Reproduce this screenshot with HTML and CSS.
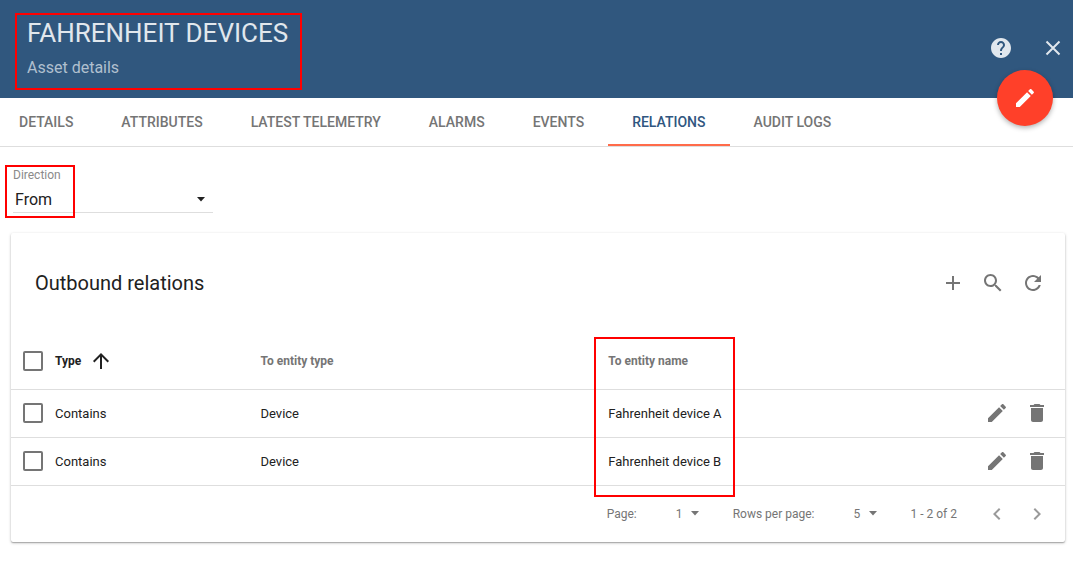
FILE: index.html
```html
<!DOCTYPE html>
<html lang="en">
<head>
<meta charset="utf-8">
<title>Asset details</title>
<meta name="viewport" content="width=device-width, initial-scale=1">
<link rel="stylesheet" href="styles.css">
</head>
<body>
<svg class="sprite" aria-hidden="true">
  <symbol id="pencil" viewBox="0 0 24 24"><path d="M3 17.25V21h3.75L17.81 9.94l-3.75-3.75L3 17.25zM20.71 7.04c.39-.39.39-1.02 0-1.41l-2.34-2.34c-.39-.39-1.02-.39-1.41 0l-1.83 1.83 3.75 3.75 1.83-1.83z"/></symbol>
  <symbol id="trash" viewBox="0 0 24 24"><path d="M6 19c0 1.1.9 2 2 2h8c1.100 0 2-.9 2-2V7H6v12zM19 4h-3.500l-1-1h-5l-1 1H5v2h14V4z"/></symbol>
  <symbol id="caret" viewBox="0 0 10 5"><path d="M1 0h8L5 4.500z"/></symbol>
</svg>

<header class="header">
  <div class="heading marked">
    <h1 class="title">FAHRENHEIT DEVICES</h1>
    <p class="subtitle">Asset details</p>
  </div>
  <div class="header-actions">
    <button class="icon-button" aria-label="Help"><svg class="icon" viewBox="0 0 24 24"><path d="M12 2C6.480 2 2 6.480 2 12s4.480 10 10 10 10-4.480 10-10S17.520 2 12 2zm1 17h-2v-2h2v2zm2.070-7.750l-.9.920C13.450 12.900 13 13.500 13 15h-2v-.5c0-1.100.450-2.100 1.170-2.830l1.240-1.260c.370-.360.590-.860.590-1.410 0-1.100-.9-2-2-2s-2 .9-2 2H8c0-2.210 1.790-4 4-4s4 1.790 4 4c0 .880-.360 1.680-.930 2.250z"/></svg></button>
    <button class="icon-button" aria-label="Close"><svg class="icon" viewBox="0 0 24 24"><path d="M5.500 5.500l13 13M18.500 5.500l-13 13" class="close-stroke"/></svg></button>
  </div>
  <button class="fab" aria-label="Edit asset"><svg class="icon"><use href="#pencil"/></svg></button>
</header>

<nav class="tabs">
  <a class="tab" href="#details">DETAILS</a>
  <a class="tab" href="#attributes">ATTRIBUTES</a>
  <a class="tab" href="#telemetry">LATEST TELEMETRY</a>
  <a class="tab" href="#alarms">ALARMS</a>
  <a class="tab" href="#events">EVENTS</a>
  <a class="tab tab-active" href="#relations" aria-current="page">RELATIONS</a>
  <a class="tab" href="#audit">AUDIT LOGS</a>
</nav>

<main class="content">
  <div class="direction marked">
    <label class="direction-label" for="direction">Direction</label>
    <div class="select direction-select">
      <select id="direction"><option>From</option><option>To</option></select>
      <svg class="caret"><use href="#caret"/></svg>
    </div>
  </div>

  <section class="card">
    <div class="toolbar">
      <h2 class="card-title">Outbound relations</h2>
      <button class="icon-button" aria-label="Add"><svg class="icon" viewBox="0 0 24 24"><path d="M19 13h-6v6h-2v-6H5v-2h6V5h2v6h6v2z"/></svg></button>
      <button class="icon-button" aria-label="Search"><svg class="icon" viewBox="0 0 24 24"><path d="M15.500 14h-.790l-.280-.270C15.410 12.590 16 11.110 16 9.500 16 5.910 13.090 3 9.500 3S3 5.910 3 9.500 5.910 16 9.500 16c1.610 0 3.090-.590 4.230-1.570l.270.280v.790l5 4.990L20.490 19l-4.990-5zm-6 0C7.010 14 5 11.990 5 9.500S7.010 5 9.500 5 14 7.010 14 9.500 11.990 14 9.500 14z"/></svg></button>
      <button class="icon-button" aria-label="Refresh"><svg class="icon" viewBox="0 0 24 24"><path d="M17.650 6.350C16.200 4.900 14.210 4 12 4c-4.420 0-7.990 3.580-7.990 8s3.570 8 7.990 8c3.730 0 6.840-2.550 7.730-6h-2.080c-.820 2.330-3.040 4-5.650 4-3.310 0-6-2.690-6-6s2.690-6 6-6c1.660 0 3.140.690 4.220 1.780L13 11h7V4l-2.350 2.350z"/></svg></button>
    </div>

    <table class="relations">
      <colgroup><col class="col-check"><col class="col-type"><col class="col-entity"><col><col class="col-actions"></colgroup>
      <thead>
        <tr>
          <th class="check-cell"><input type="checkbox" class="checkbox" aria-label="Select all"></th>
          <th class="sorted"><span class="sort">Type<svg class="icon" viewBox="0 0 24 24"><path d="M4 12l1.410 1.410L11 7.830V20h2V7.830l5.580 5.590L20 12l-8-8-8 8z"/></svg></span></th>
          <th>To entity type</th>
          <th><span class="name-mark">To entity name</span></th>
          <th></th>
        </tr>
      </thead>
      <tbody>
        <tr>
          <td class="check-cell"><input type="checkbox" class="checkbox" aria-label="Select Fahrenheit device A"></td>
          <td>Contains</td><td>Device</td><td>Fahrenheit device A</td>
          <td><div class="row-actions">
            <button class="icon-button" aria-label="Edit relation"><svg class="icon"><use href="#pencil"/></svg></button>
            <button class="icon-button" aria-label="Delete relation"><svg class="icon"><use href="#trash"/></svg></button>
          </div></td>
        </tr>
        <tr>
          <td class="check-cell"><input type="checkbox" class="checkbox" aria-label="Select Fahrenheit device B"></td>
          <td>Contains</td><td>Device</td><td>Fahrenheit device B</td>
          <td><div class="row-actions">
            <button class="icon-button" aria-label="Edit relation"><svg class="icon"><use href="#pencil"/></svg></button>
            <button class="icon-button" aria-label="Delete relation"><svg class="icon"><use href="#trash"/></svg></button>
          </div></td>
        </tr>
      </tbody>
    </table>

    <footer class="pagination">
      <div class="page-field">
        <label for="page">Page:</label>
        <div class="select page-select"><select id="page"><option>1</option></select><svg class="caret"><use href="#caret"/></svg></div>
      </div>
      <div class="page-field">
        <label for="rows">Rows per page:</label>
        <div class="select page-select"><select id="rows"><option>5</option><option>10</option></select><svg class="caret"><use href="#caret"/></svg></div>
      </div>
      <span class="range">1 - 2 of 2</span>
      <div class="pager">
        <button class="icon-button" aria-label="Previous page" disabled><svg class="icon" viewBox="0 0 24 24"><path d="M15.410 7.410L14 6l-6 6 6 6 1.410-1.410L10.830 12z"/></svg></button>
        <button class="icon-button" aria-label="Next page" disabled><svg class="icon" viewBox="0 0 24 24"><path d="M10 6L8.590 7.410 13.170 12l-4.580 4.590L10 18l6-6z"/></svg></button>
      </div>
    </footer>
  </section>
</main>
</body>
</html>
```

FILE: styles.css
```css
*, *::after { box-sizing: border-box; }

body {
  margin: 0;
  background: #fff;
  color: #212121;
  font-family: Roboto, "Liberation Sans", sans-serif;
  font-size: 13px;
}

h1, h2, p { margin: 0; font-weight: 400; }

.sprite { position: absolute; width: 0; height: 0; }

.icon { display: block; flex: none; width: 24px; height: 24px; fill: currentColor; }

.icon-button {
  display: flex;
  align-items: center;
  justify-content: center;
  width: 40px;
  height: 40px;
  padding: 0;
  border: 0;
  background: none;
  color: #757575;
}

.icon-button:disabled { color: #9a9a9a; }

/* Red callout frames drawn over the parts they point out */
.marked, .name-mark { position: relative; }

.marked::after, .name-mark::after {
  content: "";
  position: absolute;
  border: 2px solid #f00;
  pointer-events: none;
}

.header {
  position: relative;
  display: flex;
  justify-content: space-between;
  align-items: center;
  min-height: 98px;
  padding: 0 0 0 27px;
  background: #30577e;
  color: #e1e7ed;
}

.heading { padding-top: 2px; }
.heading::after { inset: 0 -14px -5px -12px; }
.title { font-size: 26px; line-height: 36px; }
.subtitle { font-size: 16px; line-height: 34px; color: #b1c0cf; }

.header-actions { display: flex; gap: 12px; padding-bottom: 2px; }
.header-actions .icon-button { color: inherit; }
.close-stroke { fill: none; stroke: currentColor; stroke-width: 2; }

.fab {
  position: absolute;
  right: 20px;
  bottom: -28px;
  display: flex;
  align-items: center;
  justify-content: center;
  width: 56px;
  height: 56px;
  padding: 0;
  border: 0;
  border-radius: 50%;
  background: #ff4029;
  color: #fff;
  box-shadow: 0 2px 5px rgba(0, 0, 0, .3);
}

.tabs { display: flex; border-bottom: 1px solid #dedede; }

.tab {
  padding: 2px 24px 0;
  border-bottom: 2px solid transparent;
  color: #757575;
  font-size: 14px;
  font-weight: 500;
  line-height: 44px;
  text-decoration: none;
  white-space: nowrap;
}

.tab:first-child { padding-left: 19px; }
.tab-active { border-color: #ff6b4a; color: #305680; }

.content { padding: 20px 8px 20px 11px; }

.direction { width: 202px; padding-left: 2px; margin-bottom: 20px; }
.direction::after { top: -2px; bottom: -5px; left: -6px; width: 70px; }
.direction-label { display: block; color: #8a8a8a; font-size: 12px; line-height: 16px; }

.select { display: grid; align-items: center; }
.select > * { grid-area: 1 / 1; }

.select select {
  appearance: none;
  width: 100%;
  padding: 0;
  border: 0;
  background: none;
  color: inherit;
  font: inherit;
}

.caret { width: 10px; height: 5px; justify-self: end; fill: currentColor; pointer-events: none; }

.direction-select { height: 30px; padding: 3px 7px 0 2px; border-bottom: 1px solid #dedede; font-size: 16px; }

.card {
  border-radius: 2px;
  box-shadow: 0 1px 3px rgba(0, 0, 0, .25), 0 1px 1px rgba(0, 0, 0, .2);
}

.toolbar { display: flex; align-items: center; height: 100px; padding: 0 12px 0 24px; }
.card-title { flex: 1; font-size: 20px; }

.relations { width: 100%; table-layout: fixed; border-collapse: collapse; }
.col-check { width: 44px; }
.col-type { width: 19.5%; }
.col-entity { width: 33%; }
.col-actions { width: 88px; }

.relations th, .relations td { padding: 0; border-bottom: 1px solid #dedede; text-align: left; }
.relations th { height: 56px; color: #757575; font-size: 12px; font-weight: 700; }
.relations .sorted { color: #212121; }
.relations td { height: 48px; }
.relations .check-cell { padding-left: 12px; }

.checkbox {
  appearance: none;
  display: block;
  width: 20px;
  height: 20px;
  margin: 0;
  border: 2px solid #757575;
  border-radius: 2px;
}

.sort { display: flex; align-items: center; gap: 8px; }
.name-mark::after { top: -17px; left: -14px; width: 141px; height: 160px; }
.row-actions { display: flex; }

.pagination {
  display: flex;
  align-items: center;
  justify-content: flex-end;
  height: 56px;
  padding-right: 8px;
  color: #757575;
  font-size: 12px;
}

.page-field { display: flex; align-items: center; gap: 39px; margin-right: 33px; }
.page-select { width: 24px; }
.range { margin-right: 20px; }
.pager { display: flex; }
```
